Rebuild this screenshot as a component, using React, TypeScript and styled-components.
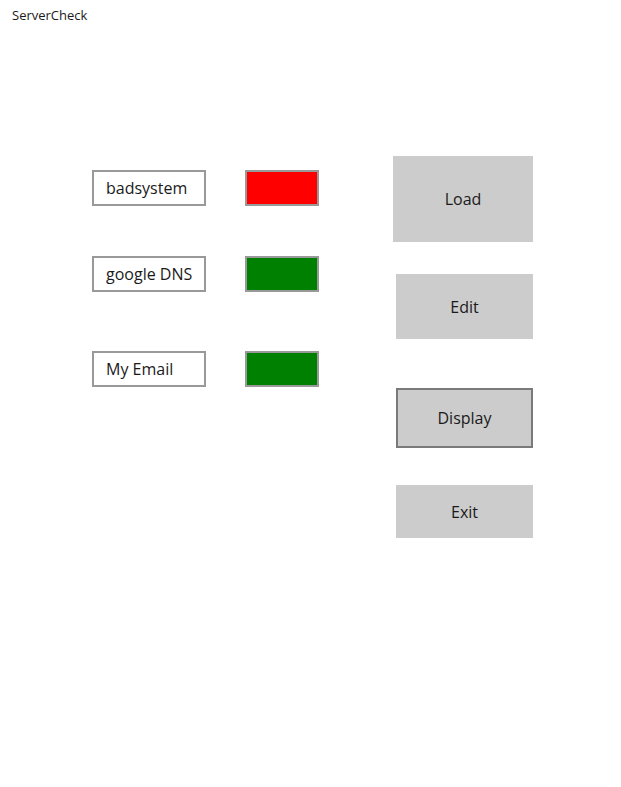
import React from 'react';
import styled, { createGlobalStyle } from 'styled-components';

const GlobalStyle = createGlobalStyle`
    body {
        margin: 0;
        background: #ffffff;
        font-family: "Open Sans", "Noto Sans", sans-serif;
        color: #1a1a1a;
    }
`;

const Page = styled.div`
    display: flex;
    flex-direction: column;
    width: 621px;
    height: 787px;
    background: #ffffff;
`;

const TitleBar = styled.div`
    height: 30px;
    padding-left: 12px;
    display: flex;
    align-items: center;
    font-size: 13px;
    color: #1a1a1a;
`;

const Content = styled.div`
    display: flex;
    padding-left: 92px;
`;

const ServerList = styled.div`
    display: flex;
    flex-direction: column;
    margin-top: 140px;
`;

const ServerRow = styled.div<{ $top: number }>`
    display: flex;
    align-items: center;
    gap: 39px;
    margin-top: ${p => p.$top}px;
`;

const NameBox = styled.div`
    box-sizing: border-box;
    width: 114px;
    height: 36px;
    border: 2px solid #999999;
    background: #ffffff;
    padding: 0 7px 0 12px;
    display: flex;
    align-items: center;
`;

const NameText = styled.span`
    display: block;
    overflow: hidden;
    white-space: nowrap;
    font-size: 16px;
`;

const StatusBox = styled.div<{ $up: boolean }>`
    box-sizing: border-box;
    width: 74px;
    height: 36px;
    border: 2px solid #999999;
    background: ${p => (p.$up ? '#008000' : '#ff0000')};
`;

const ButtonColumn = styled.div`
    display: flex;
    flex-direction: column;
    align-items: flex-end;
    width: 140px;
    margin-left: 74px;
    margin-top: 126px;
`;

const ActionButton = styled.button<{ $wide?: boolean; $height: number; $top: number; $focused?: boolean }>`
    box-sizing: border-box;
    width: ${p => (p.$wide ? 140 : 137)}px;
    height: ${p => p.$height}px;
    margin-top: ${p => p.$top}px;
    background: #cccccc;
    border: 2px solid ${p => (p.$focused ? '#7a7a7a' : '#cccccc')};
    font-family: "Open Sans", "Noto Sans", sans-serif;
    font-size: 16px;
    color: #1a1a1a;
    padding: 0;
`;

const servers = [
    { name: 'badsystem', up: false, top: 0 },
    { name: 'google DNS', up: true, top: 50 },
    { name: 'My Email', up: true, top: 59 },
];

const App = () => {
    return (
        <Page>
            <GlobalStyle />
            <TitleBar>ServerCheck</TitleBar>
            <Content>
                <ServerList>
                    {servers.map(s => (
                        <ServerRow key={s.name} $top={s.top}>
                            <NameBox>
                                <NameText>{s.name}</NameText>
                            </NameBox>
                            <StatusBox $up={s.up} />
                        </ServerRow>
                    ))}
                </ServerList>
                <ButtonColumn>
                    <ActionButton $wide $height={86} $top={0}>Load</ActionButton>
                    <ActionButton $height={65} $top={32}>Edit</ActionButton>
                    <ActionButton $height={60} $top={49} $focused>Display</ActionButton>
                    <ActionButton $height={53} $top={37}>Exit</ActionButton>
                </ButtonColumn>
            </Content>
        </Page>
    );
};

export default App;
